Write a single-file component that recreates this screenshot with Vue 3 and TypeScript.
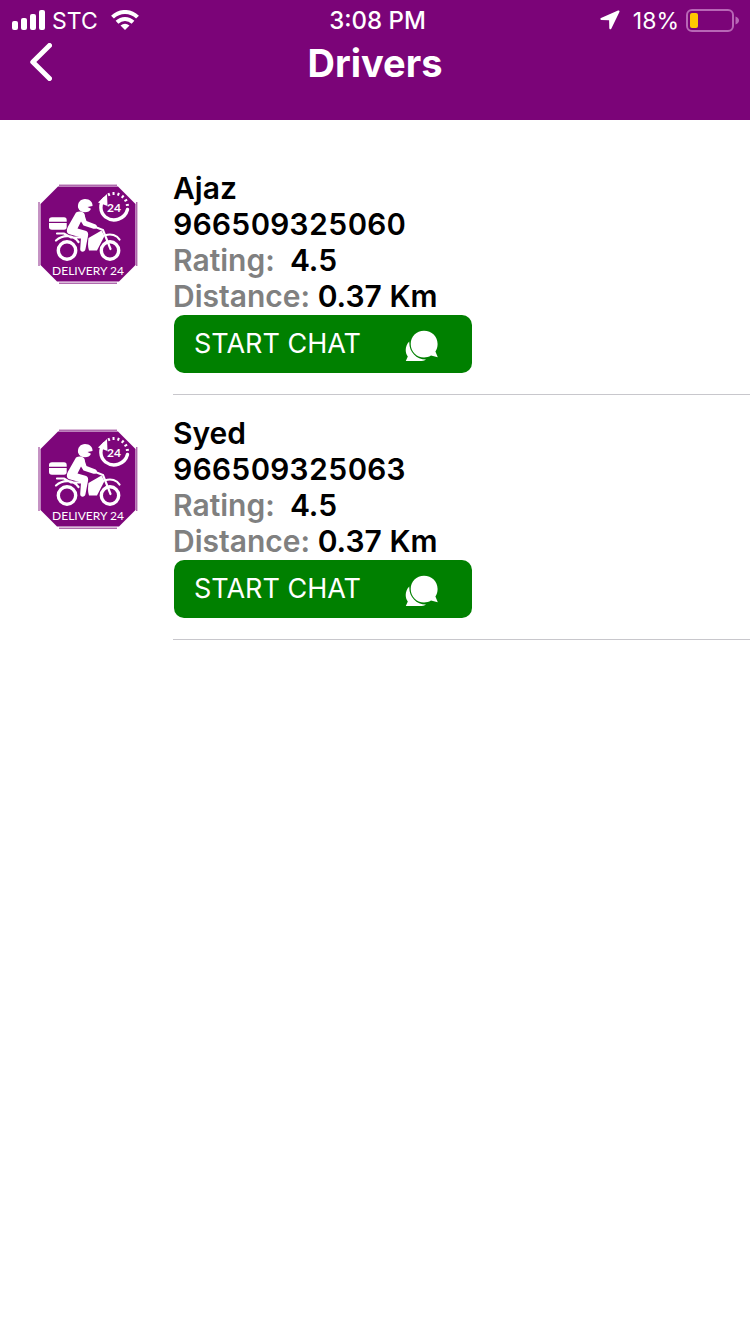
<script setup lang="ts">
interface Driver {
  name: string
  phone: string
  rating: string
  distance: string
}

const drivers: Driver[] = [
  { name: 'Ajaz', phone: '966509325060', rating: '4.5', distance: '0.37 Km' },
  { name: 'Syed', phone: '966509325063', rating: '4.5', distance: '0.37 Km' },
]

const tickAngles: number[] = [-112, -92, -71, -50, -29, -9]
</script>

<template>
  <div class="app">
    <header class="header">
      <div class="status">
        <div class="status-side">
          <svg class="signal" viewBox="0 0 33 20" aria-hidden="true">
            <rect x="0" y="11" width="6" height="9" rx="2" />
            <rect x="9" y="8" width="6" height="12" rx="2" />
            <rect x="18" y="4" width="6" height="16" rx="2" />
            <rect x="27" y="0" width="6" height="20" rx="2" />
          </svg>
          <span class="carrier">STC</span>
          <svg class="wifi" viewBox="0 0 28 20" aria-hidden="true">
            <path d="M1.5 7.2C8.5 .2 19.500 .2 26.500 7.200" />
            <path d="M6 12.300C10.600 7.900 17.400 7.900 22 12.300" />
            <path class="dot" d="M9.500 15.600Q14 11.800 18.500 15.600L14 20Z" />
          </svg>
        </div>
        <span class="time">3:08 PM</span>
        <div class="status-side right">
          <svg class="location" viewBox="0 0 20 20" aria-hidden="true">
            <path d="M18 .5 1 8.100C-.1 8.700 .2 10 1.300 10L9.100 10.200 9.300 18C9.400 19.600 10.700 19.800 11.400 18.500L19.400 2C19.800 .8 19 .1 18 .5Z" />
          </svg>
          <span class="percent">18%</span>
          <svg class="battery" viewBox="0 0 53 24" aria-hidden="true">
            <rect class="shell" x="1" y="2" width="46" height="21" rx="5" />
            <rect class="charge" x="4" y="5" width="8" height="15" rx="2" />
            <path class="cap" d="M49.500 8.500Q53 10 53 12.500T49.500 16.500Z" />
          </svg>
        </div>
      </div>
      <div class="nav">
        <button class="back" type="button" aria-label="Back">
          <svg viewBox="0 0 22 38" aria-hidden="true"><path d="M19.500 2.500 2.800 19 19.500 35.500" /></svg>
        </button>
        <h1>Drivers</h1>
      </div>
    </header>

    <main>
      <ul class="drivers">
        <li v-for="driver in drivers" :key="driver.phone" class="driver">
          <svg class="logo" viewBox="0 0 100 100" role="img" aria-label="Delivery 24">
            <path class="plum" d="M20 2.500H80L97.500 20V81L81 97.500H19L2.500 81V20Z" />
            <path class="rim" d="M21 1.200H79M21 99.200H79M1 18V82M98.800 18V82" />
            <g class="white">
              <path d="M40 23.500C39.500 18.500 42.500 15 47 15C52 15 55 18.500 54.500 22L49.500 23 53 24.800C51.500 29.500 42 30 40 23.500Z" />
              <path d="M11 36Q11 33.300 14 33.300H26Q28.700 33.300 28.700 36V37.700H11ZM11 38.900H28.700V43Q28.700 45.700 26 45.700H14Q11 45.700 11 43Z" />
              <path d="M38 28.500C42 26 47.500 28 47 32.500L48.500 37 57 40.200C60.500 41.600 59 45.600 55.500 44.700L45.500 41.500 43 37.500 39.500 44.500 47.500 46.800C50 47.500 50.500 50 50 52L47.500 65C47 68.500 42 68.500 42.200 65L43 53.500 31.500 50.300C28 49.200 28.500 45.500 30 42.500Z" />
              <path d="M50.500 54 63.500 46.500 66.500 52 59 66.500H51C49.500 62 50 58 50.500 54Z" />
            </g>
            <g class="line">
              <circle cx="29" cy="66.500" r="8.700" />
              <circle cx="72" cy="66.500" r="8.700" />
              <path class="thin" d="M19 49.500H26L33 53.500H43M18 56.500C25 50.500 35 50.500 40.500 58M56 42.500 65 46 72.500 65M67 51.500C73 49 79 51.500 81.500 55.500" />
              <path d="M66.500 14.500C61.500 19.500 61.500 28 67.500 33C75.500 39 87 35 89.500 25.500" />
            </g>
            <path class="white" d="M60 18.500 69 10 69.500 22Z" />
            <rect
              v-for="angle in tickAngles"
              :key="angle"
              class="white"
              x="88"
              y="22"
              width="3"
              height="2"
              :transform="`rotate(${angle} 76 23)`"
            />
            <text class="clock-text" x="76" y="28">24</text>
            <text class="brand" x="50" y="91">DELIVERY 24</text>
          </svg>
          <div class="details">
            <p>{{ driver.name }}</p>
            <p class="digits">{{ driver.phone }}</p>
            <p><span class="label">Rating:&nbsp;</span> {{ driver.rating }}</p>
            <p><span class="label">Distance:</span> {{ driver.distance }}</p>
            <button class="chat" type="button">
              <span>START CHAT</span>
              <svg viewBox="0 0 34 32" aria-hidden="true">
                <path d="M4.300 11.500C.2 15.500 -.5 22 2.800 26.500L.8 31H14C17.500 31 19.500 30.500 21 29.500C11 29.500 3.800 21.500 4.300 11.500Z" />
                <path d="M19 .7C26.800 .7 32.600 6.500 32.600 14C32.600 17.200 31.700 19.600 30.400 21.600L32.800 27.300 26 25.600C23.800 27 21.500 27.500 19 27.500C11.500 27.500 5.700 21.500 5.700 14C5.700 6.500 11.500 .7 19 .7Z" />
              </svg>
            </button>
          </div>
        </li>
      </ul>
    </main>
  </div>
</template>

<style>
body {
  margin: 0;
  background: #fff;
}
</style>

<style scoped>
.app {
  min-height: 100vh;
  background: #fff;
  color: #000;
  font-family: Inter, "Liberation Sans", sans-serif;
}

.header {
  box-sizing: border-box;
  min-height: 120px;
  background: #7b0478;
  color: #fff;
}

.status {
  display: grid;
  grid-template-columns: 1fr auto 1fr;
  align-items: center;
  height: 40px;
  padding: 0 11px 0 12px;
  font-size: 23px;
  line-height: 40px;
}

.status-side {
  display: flex;
  align-items: center;
}

.status span {
  padding-top: 2px;
  line-height: 38px;
}

.right {
  justify-content: flex-end;
}

.signal {
  width: 33px;
  height: 20px;
  margin-right: 7px;
  fill: #fff;
}

.wifi {
  width: 28px;
  height: 20px;
  margin-left: 13px;
  fill: none;
  stroke: #fff;
  stroke-width: 4;
}

.wifi .dot {
  fill: #fff;
  stroke: none;
}

.time {
  padding-left: 4px;
  font-weight: 500;
  font-size: 24px;
}

.location {
  width: 20px;
  height: 20px;
  margin-right: 13px;
  fill: #fff;
}

.battery {
  width: 53px;
  height: 24px;
  margin-left: 7px;
}

.shell {
  fill: none;
  stroke: #b867b6;
  stroke-width: 2;
}

.charge {
  fill: #ffc800;
}

.cap {
  fill: #b867b6;
}

.nav {
  display: grid;
  grid-template-columns: 80px 1fr 80px;
  align-items: center;
  height: 46px;
}

.back {
  display: flex;
  justify-self: start;
  margin: 0 0 2px;
  padding: 0 30px;
  border: 0;
  background: none;
}

.back svg {
  width: 22px;
  height: 38px;
  fill: none;
  stroke: #fff;
  stroke-width: 5;
  stroke-linecap: round;
  stroke-linejoin: round;
}

h1 {
  margin: 0;
  font-size: 38px;
  font-weight: 700;
  line-height: 46px;
  text-align: center;
}

.drivers {
  margin: 0;
  padding: 30px 0 0;
  list-style: none;
}

.driver {
  display: flex;
  align-items: flex-start;
}

.logo {
  flex: none;
  width: 100px;
  height: 100px;
  margin: 34px 35px 0 38px;
}

.plum {
  fill: #7d067a;
}

.rim {
  stroke: #8b2688;
  stroke-width: 1;
}

.white {
  fill: #fff;
}

.line {
  fill: none;
  stroke: #fff;
  stroke-width: 3.4;
  stroke-linecap: round;
}

.line .thin {
  stroke-width: 2.2;
}

.clock-text,
.brand {
  fill: #fff;
  font-family: Lato, sans-serif;
  font-size: 12px;
  text-anchor: middle;
}

.clock-text {
  font-weight: 700;
}

.details {
  flex: 1;
  box-sizing: border-box;
  min-width: 0;
  padding: 20px 0 21px;
  border-bottom: 1px solid #c8c7cc;
}

.details p {
  margin: 0;
  font-size: 30px;
  font-weight: 600;
  line-height: 36px;
}

.details .digits {
  font-variant-numeric: tabular-nums;
}

.label {
  color: #808080;
}

.chat {
  display: flex;
  align-items: center;
  justify-content: space-between;
  box-sizing: border-box;
  width: 298px;
  height: 58px;
  margin: 1px 0 0 1px;
  padding: 0 33px 0 20px;
  border: 0;
  border-radius: 10px;
  background: #008000;
  color: #fff;
  font-family: inherit;
  font-size: 27px;
  font-weight: 400;
  line-height: 36px;
}

.chat svg {
  width: 34px;
  height: 32px;
  margin-top: 3px;
  fill: #fff;
}
</style>
